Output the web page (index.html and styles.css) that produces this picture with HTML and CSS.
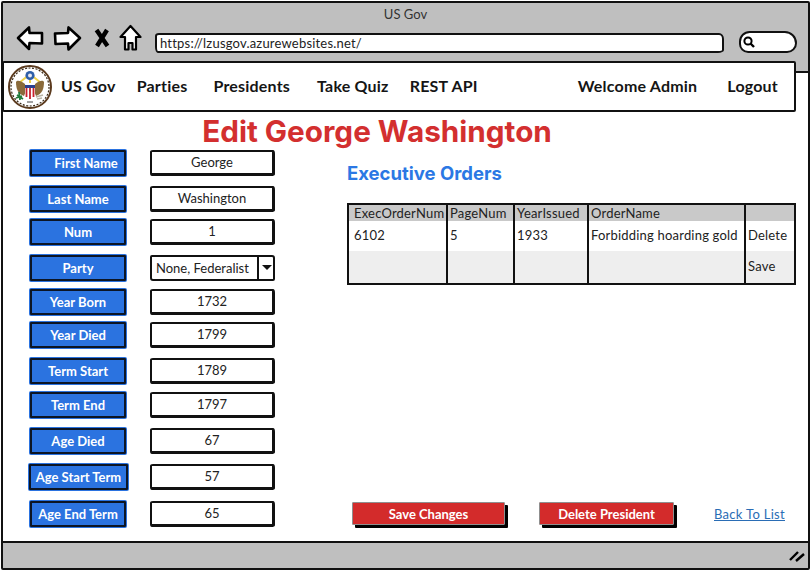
FILE: index.html
```html
<!DOCTYPE html>
<html lang="en">
<head>
    <meta charset="UTF-8">
    <meta name="viewport" content="width=device-width, initial-scale=1.0">
    <title>US Gov</title>
    <link rel="stylesheet" href="styles.css">
</head>
<body>

<div class="window">
    <!-- Browser chrome -->
    <div class="chrome">
        <div class="window-title">US Gov</div>
        <div class="toolbar">
            <svg class="icon icon-back" width="28" height="26" viewBox="0 0 28 26">
                <path d="M2 13 L13 2.5 L13.5 8 L26 8 L26 18.5 L13.5 18 L13 24 Z" fill="#fff" stroke="#000" stroke-width="2.6" stroke-linejoin="round"/>
            </svg>
            <svg class="icon icon-forward" width="29" height="26" viewBox="0 0 29 26">
                <path d="M27 13 L15.5 2.5 L15 8 L2 8.5 L2.5 19 L15 18.5 L15.5 24.5 Z" fill="#fff" stroke="#000" stroke-width="2.6" stroke-linejoin="round"/>
            </svg>
            <svg class="icon icon-stop" width="16" height="20" viewBox="0 0 16 20">
                <path d="M2.5 2 L13.5 18 M13 2 L3 18" fill="none" stroke="#000" stroke-width="4.4"/>
            </svg>
            <svg class="icon icon-home" width="23" height="28" viewBox="0 0 23 28">
                <path d="M11.5 2 L21.5 13 L17 13 L17 25.5 L13.5 25.5 L13.5 19 L9.5 19 L9.5 25.5 L6 25.5 L6 13 L1.5 13 Z" fill="#fff" stroke="#000" stroke-width="2.2" stroke-linejoin="round"/>
            </svg>
            <div class="url-bar">https://lzusgov.azurewebsites.net/</div>
            <div class="search-box">
                <svg width="14" height="14" viewBox="0 0 14 14">
                    <circle cx="6" cy="6" r="3.6" fill="none" stroke="#000" stroke-width="2"/>
                    <path d="M8.5 8.5 L12 12" stroke="#000" stroke-width="2.4"/>
                </svg>
            </div>
        </div>
    </div>

    <div class="viewport">
        <nav class="navbar">
            <svg class="seal" width="46" height="44" viewBox="0 0 46 44">
                <circle cx="23" cy="22" r="21" fill="#fff" stroke="#5b3a1e" stroke-width="2"/>
                <circle cx="23" cy="22" r="19" fill="none" stroke="#3a2a18" stroke-width="1.2" stroke-dasharray="2 1.5"/>
                <path d="M23 9 L12 18 M23 9 L34 18 M23 9 L23 18" stroke="#f0d24a" stroke-width="2"/>
                <circle cx="23" cy="10.5" r="4.6" fill="#2f5fa8"/>
                <circle cx="23" cy="10.5" r="2" fill="#e8e8f0"/>
                <path d="M18 19 C13 15 10 15 9 17 C9 24 11 29 17 31 L19 26 Z" fill="#8a6a3a"/>
                <path d="M28 19 C33 15 36 15 37 17 C37 24 35 29 29 31 L27 26 Z" fill="#8a6a3a"/>
                <path d="M18 20 L28 20 L28 23 L18 23 Z" fill="#2b3f8f"/>
                <path d="M18 23 L28 23 L28 29 C28 32 25 33 23 34 C21 33 18 32 18 29 Z" fill="#fff"/>
                <path d="M19.5 23 V32 M23 23 V34 M26.5 23 V32" stroke="#c8202c" stroke-width="1.8"/>
                <path d="M10 30 L16 34 M12 27 L13 35 M9 33 L15 31" stroke="#1f7a3a" stroke-width="1.8"/>
                <path d="M29 32 L36 30 M30 34 L35 33" stroke="#b9b4a6" stroke-width="1.6"/>
                <path d="M20 37 L26 37" stroke="#8a8a8a" stroke-width="1.6"/>
            </svg>
            <a class="nav-link nav-brand" href="#">US Gov</a>
            <a class="nav-link nav-parties" href="#">Parties</a>
            <a class="nav-link nav-presidents" href="#">Presidents</a>
            <a class="nav-link nav-quiz" href="#">Take Quiz</a>
            <a class="nav-link nav-api" href="#">REST API</a>
            <span class="nav-link nav-welcome">Welcome Admin</span>
            <a class="nav-link nav-logout" href="#">Logout</a>
        </nav>

        <h1 class="page-title">Edit George Washington</h1>

        <div class="content">
            <form class="president-form">
                <label class="field-label label-first">First Name</label>
                <div class="field-value">George</div>
                <label class="field-label">Last Name</label>
                <div class="field-value">Washington</div>
                <label class="field-label">Num</label>
                <div class="field-value">1</div>
                <label class="field-label">Party</label>
                <div class="field-select">
                    <span class="select-text">None, Federalist</span>
                    <span class="select-arrow"></span>
                </div>
                <label class="field-label">Year Born</label>
                <div class="field-value">1732</div>
                <label class="field-label">Year Died</label>
                <div class="field-value">1799</div>
                <label class="field-label">Term Start</label>
                <div class="field-value">1789</div>
                <label class="field-label">Term End</label>
                <div class="field-value">1797</div>
                <label class="field-label">Age Died</label>
                <div class="field-value">67</div>
                <label class="field-label label-wide">Age Start Term</label>
                <div class="field-value">57</div>
                <label class="field-label">Age End Term</label>
                <div class="field-value">65</div>
            </form>

            <section class="orders">
                <h2 class="orders-title">Executive Orders</h2>
                <table class="orders-table">
                    <thead>
                        <tr>
                            <th class="col-num">ExecOrderNum</th>
                            <th class="col-page">PageNum</th>
                            <th class="col-year">YearIssued</th>
                            <th class="col-name">OrderName</th>
                            <th></th>
                        </tr>
                    </thead>
                    <tbody>
                        <tr>
                            <td>6102</td>
                            <td>5</td>
                            <td>1933</td>
                            <td>Forbidding hoarding gold</td>
                            <td>Delete</td>
                        </tr>
                        <tr class="row-new">
                            <td></td>
                            <td></td>
                            <td></td>
                            <td></td>
                            <td>Save</td>
                        </tr>
                    </tbody>
                </table>

                <div class="actions">
                    <button class="btn btn-save" type="button">Save Changes</button>
                    <button class="btn btn-delete" type="button">Delete President</button>
                    <a class="back-link" href="#">Back To List</a>
                </div>
            </section>
        </div>
    </div>

    <div class="status-bar">
        <svg width="16" height="13" viewBox="0 0 16 13">
            <path d="M1 11 L9 3 M7 12 L15 5" stroke="#000" stroke-width="2.4"/>
        </svg>
    </div>
</div>

</body>
</html>
```

FILE: styles.css
```css
* {
    box-sizing: border-box;
}
body {
    margin: 0;
    font-family: "Lato", "Noto Sans", sans-serif;
    color: #1c1c1c;
    background-color: #fff;
}
.window {
    display: flex;
    flex-direction: column;
    width: 809px;
    height: 569px;
    margin: 1px 0 0 1px;
    border: 2px solid #111;
    border-radius: 2px;
    background-color: #bfbfbf;
}

/* Browser chrome */
.chrome {
    height: 68px;
    flex-shrink: 0;
}
.window-title {
    padding-top: 3px;
    text-align: center;
    font-size: 13px;
    line-height: 17px;
    color: #333;
}
.toolbar {
    display: flex;
    align-items: center;
    height: 28px;
    margin-top: 1px;
    padding-left: 13px;
}
.icon {
    flex-shrink: 0;
}
.icon-forward {
    margin-left: 9px;
}
.icon-stop {
    margin-left: 12px;
}
.icon-home {
    margin-left: 9px;
}
.url-bar {
    width: 569px;
    height: 20px;
    margin: 9px 0 0 13px;
    padding-left: 3px;
    background-color: #fff;
    border: 2px solid #111;
    border-radius: 4px 5px 6px 3px / 3px 6px 3px 6px;
    font-size: 13px;
    letter-spacing: 0.2px;
    line-height: 16px;
    color: #222;
}
.search-box {
    display: flex;
    align-items: center;
    width: 58px;
    height: 22px;
    margin: 7px 0 0 15px;
    padding-left: 1px;
    background-color: #fff;
    border: 2px solid #111;
    border-radius: 14px 16px 13px 12px;
}

/* Page area */
.viewport {
    flex: 1;
    display: flex;
    flex-direction: column;
    min-height: 0;
    background-color: #fff;
    border-top: 2px solid #111;
}
.navbar {
    position: relative;
    display: flex;
    align-items: center;
    flex-shrink: 0;
    height: 51px;
    margin: -12px 12px 0 -1px;
    padding-bottom: 2px;
    background-color: #fff;
    border: 2px solid #111;
    border-radius: 2px;
}
.seal {
    margin: 2px 0 0 3px;
    flex-shrink: 0;
}
.nav-link {
    font-size: 16px;
    font-weight: 700;
    letter-spacing: 0.2px;
    color: #151515;
    text-decoration: none;
    white-space: nowrap;
}
.nav-brand {
    margin-left: 8px;
}
.nav-parties {
    margin-left: 21px;
}
.nav-presidents {
    margin-left: 26px;
}
.nav-quiz {
    margin-left: 27px;
}
.nav-api {
    margin-left: 21px;
}
.nav-welcome {
    margin-left: auto;
}
.nav-logout {
    margin: 0 16px 0 30px;
}
.page-title {
    flex-shrink: 0;
    height: 38px;
    margin: 0;
    padding: 1px 57px 0 0;
    text-align: center;
    font-family: "Inter", "Lato", sans-serif;
    font-size: 29.7px;
    line-height: 37px;
    font-weight: 700;
    color: #d32f2f;
}
.content {
    flex: 1;
    display: flex;
    min-height: 0;
    padding: 0 0 15px 0;
}

/* Left form */
.president-form {
    display: grid;
    grid-template-columns: 96px 125px;
    grid-template-rows: 36px 33px 36px 34px 33px 36px 34px 36px 36px 37px 26px;
    column-gap: 24px;
    width: 344px;
    margin: 0;
    padding-left: 27px;
}
.field-label {
    display: flex;
    align-items: center;
    justify-content: center;
    height: 26px;
    background-color: #2b73e0;
    border: 2px solid #0c1524;
    border-radius: 1px;
    box-shadow: 0 0 0 1px #2b73e0;
    font-size: 13px;
    font-weight: 700;
    color: #fff;
    white-space: nowrap;
}
.label-first {
    padding-left: 16px;
}
.label-wide {
    width: 99px;
    margin-left: -1px;
}
.field-value {
    height: 26px;
    background-color: #fff;
    border-style: solid;
    border-color: #111;
    border-width: 2px 3px 3px 2px;
    border-radius: 3px 2px 4px 2px / 2px 4px 2px 3px;
    text-align: center;
    font-size: 13px;
    line-height: 21px;
    color: #222;
}
.field-select {
    display: flex;
    height: 26px;
    background-color: #fff;
    border: 2px solid #111;
    border-radius: 2px 3px 2px 3px;
    font-size: 13px;
    line-height: 22px;
    color: #222;
}
.select-text {
    width: 107px;
    padding-left: 4px;
    white-space: nowrap;
    border-right: 2px solid #111;
}
.select-arrow {
    width: 0;
    height: 0;
    margin: 8px 0 0 3px;
    border-left: 5px solid transparent;
    border-right: 5px solid transparent;
    border-top: 5px solid #111;
}

/* Right side */
.orders {
    flex: 1;
    display: flex;
    flex-direction: column;
    min-width: 0;
}
.orders-title {
    margin: 11px 0 17px 0;
    font-family: "Inter", "Lato", sans-serif;
    font-size: 18.5px;
    line-height: 25px;
    font-weight: 700;
    color: #2b78e4;
}
.orders-table {
    width: 449px;
    height: 82px;
    border-collapse: collapse;
    border: 2px solid #111;
    font-size: 13px;
    letter-spacing: 0.2px;
    color: #222;
}
.orders-table th {
    height: 17px;
    padding: 0 0 0 2px;
    background-color: #c9c9c9;
    border-left: 2px solid #111;
    font-weight: 400;
    text-align: left;
    line-height: 15px;
}
.orders-table td {
    height: 30px;
    padding: 0 0 2px 2px;
    border-left: 2px solid #111;
}
.col-num {
    width: 99px;
}
.col-page {
    width: 67px;
}
.col-year {
    width: 74px;
}
.col-name {
    width: 157px;
}
.orders-table th:first-child,
.orders-table td:first-child {
    padding-left: 5px;
    border-left: none;
}
.orders-table .row-new td {
    height: 32px;
    background-color: #eeeeee;
}
.actions {
    display: flex;
    align-items: center;
    margin: auto 0 1px 0;
    padding-left: 5px;
}
.btn {
    height: 23px;
    padding: 0;
    background-color: #d32b2b;
    border: 1px solid #8f8f8f;
    border-radius: 1px;
    box-shadow: 3px 3px 0 #000;
    font-family: inherit;
    font-size: 13px;
    font-weight: 700;
    color: #fff;
}
.btn-save {
    width: 153px;
}
.btn-delete {
    width: 135px;
    margin-left: 34px;
}
.back-link {
    margin-left: 40px;
    font-size: 13px;
    letter-spacing: 0.3px;
    color: #2a6db5;
    text-decoration: underline;
}

.status-bar {
    display: flex;
    align-items: center;
    justify-content: flex-end;
    flex-shrink: 0;
    height: 27px;
    padding-right: 3px;
    border-top: 2px solid #111;
}
```
